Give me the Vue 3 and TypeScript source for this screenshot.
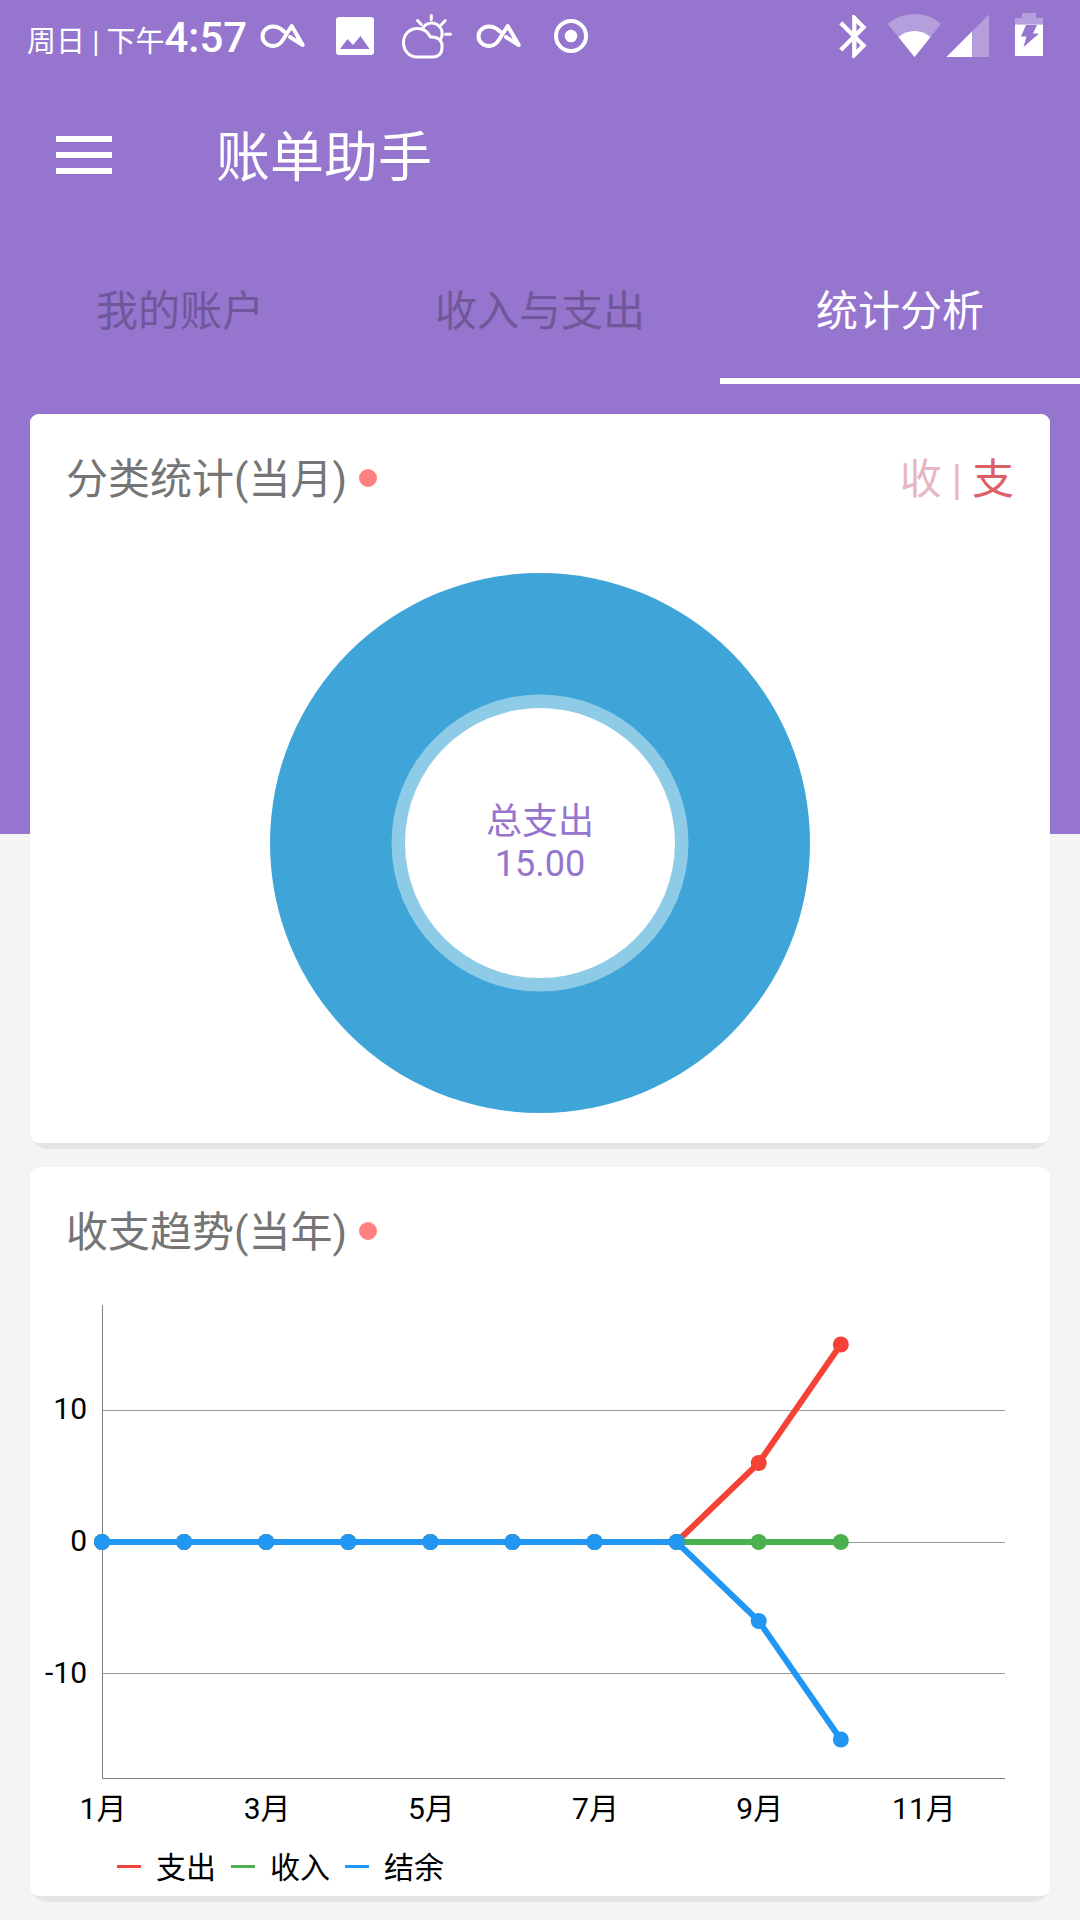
<script setup lang="ts">
import { computed, ref } from 'vue'

interface Series {
  name: string
  color: string
  values: number[]
}

const tabs: string[] = ['我的账户', '收入与支出', '统计分析']
const activeTab = ref<number>(2)
const mode = ref<'income' | 'expense'>('expense')

const series: Series[] = [
  { name: '支出', color: '#f44336', values: [0, 0, 0, 0, 0, 0, 0, 0, 6, 15] },
  { name: '收入', color: '#4caf50', values: [0, 0, 0, 0, 0, 0, 0, 0, 0, 0] },
  { name: '结余', color: '#2196f3', values: [0, 0, 0, 0, 0, 0, 0, 0, -6, -15] },
]

// Plot area inside the 1020 x 540 chart canvas
const plot = { left: 72, right: 975, top: 9, bottom: 483, max: 18 }
const zeroY = (plot.top + plot.bottom) / 2
const px = (month: number): number => plot.left + ((plot.right - plot.left) * month) / 11
const py = (value: number): number => zeroY - (value * (plot.bottom - plot.top)) / (2 * plot.max)

const ticks: number[] = [10, 0, -10]
const months: number[] = [1, 3, 5, 7, 9, 11]

const lines = computed(() =>
  series.map((s) => ({
    ...s,
    dots: s.values.map((v, i) => ({ x: px(i), y: py(v) })),
    points: s.values.map((v, i) => `${px(i)},${py(v)}`).join(' '),
  })),
)
</script>

<template>
  <div class="app">
    <header class="top">
      <div class="status">
        <div class="clock"><span class="day">周日 | 下午</span><span class="time">4:57</span></div>
        <div class="notices">
          <svg viewBox="0 0 72 72" class="line-icon bold">
            <path d="M37 31.5C34 28.500 30 26.500 26 26.500C20 26.500 15.500 31 15.500 36.200C15.500 41.500 20 46 26 46C30.500 46 33.500 43.500 35.500 40.500L44.700 26L55.700 45L43 37" />
          </svg>
          <svg viewBox="0 0 72 72" class="fill-icon">
            <path fill-rule="evenodd" d="M20 17H52A3 3 0 0 1 55 20V52A3 3 0 0 1 52 55H20A3 3 0 0 1 17 52V20A3 3 0 0 1 20 17ZM21 49H50.500L41.500 36L34 45L28.500 39Z" />
          </svg>
          <svg viewBox="0 0 72 72" class="line-icon">
            <path d="M26 57C18 57 12.500 50.500 12.500 42.500C12.500 34.500 18.500 28.500 26.500 28.500C33 28.500 37 32 39.500 37C46 36.500 51 40 51 45V48C51 53.500 47 57 42 57Z" />
            <path d="M31.500 28.500A10.500 10.500 0 1 1 49 40M40.300 15.500V19.500M26.500 20.500L30.300 24.500M54.300 20.500L50.500 24.500M54.500 34.300H59.500" />
          </svg>
          <svg viewBox="0 0 72 72" class="line-icon bold">
            <path d="M37 31.5C34 28.500 30 26.500 26 26.500C20 26.500 15.500 31 15.500 36.200C15.500 41.500 20 46 26 46C30.500 46 33.500 43.500 35.500 40.500L44.700 26L55.700 45L43 37" />
          </svg>
          <svg viewBox="0 0 72 72" class="fill-icon">
            <circle cx="36" cy="36" r="15" fill="none" stroke="#fff" stroke-width="4" />
            <circle cx="36" cy="36" r="6.300" />
          </svg>
        </div>
        <div class="system">
          <svg viewBox="0 0 60 72" class="fill-icon">
            <path transform="translate(6.500 10.600) scale(2.150)" d="M17.710 7.710L12 2h-1v7.590L6.410 5 5 6.410 10.590 12 5 17.590 6.410 19 11 14.410V22h1l5.710-5.710-4.300-4.290 4.300-4.290zM13 5.830l1.880 1.880L13 9.590V5.830zm1.880 10.460L13 18.170v-3.760l1.880 1.880z" />
          </svg>
          <svg viewBox="0 0 60 72" class="fill-icon">
            <path opacity="0.300" d="M5.700 24C13 17.500 22.500 14 32.500 14S52 17.500 59 24L32.500 57Z" />
            <path d="M16.500 37C21 33 26.500 31 32.500 31S44 33 48.500 37L32.500 57Z" />
          </svg>
          <svg viewBox="0 0 60 72" class="fill-icon">
            <path opacity="0.300" d="M47 14.500V57H4.500Z" />
            <path d="M30 31.500V57H4.500Z" />
          </svg>
          <svg viewBox="0 0 60 72" class="fill-icon">
            <path opacity="0.300" d="M20 13H34V18H41V24.500H13V18H20Z" />
            <path fill-rule="evenodd" d="M13 24.500H41V56H13ZM24 25L19 36.500H24.500L21.500 47L37 33.500H31L35 25Z" />
          </svg>
        </div>
      </div>

      <div class="toolbar">
        <button class="menu" type="button" aria-label="菜单">
          <span></span><span></span><span></span>
        </button>
        <h1>账单助手</h1>
      </div>

      <nav class="tabs" role="tablist">
        <button
          v-for="(tab, i) in tabs"
          :key="tab"
          type="button"
          role="tab"
          :aria-selected="i === activeTab"
          :class="['tab', { active: i === activeTab }]"
          @click="activeTab = i"
        >
          {{ tab }}
        </button>
      </nav>
    </header>

    <main class="content">
      <section class="card">
        <div class="card-body">
          <div class="card-head">
            <h2>分类统计(当月)</h2>
            <i class="dot"></i>
            <div class="switch">
              <button type="button" :class="{ on: mode === 'income' }" @click="mode = 'income'">收</button>
              <span>|</span>
              <button type="button" :class="{ on: mode === 'expense' }" @click="mode = 'expense'">支</button>
            </div>
          </div>
          <div class="donut-wrap">
            <svg class="donut" viewBox="0 0 540 540">
              <circle cx="270" cy="270" r="270" fill="#3fa5d8" />
              <circle cx="270" cy="270" r="148.500" fill="#8ecbe7" />
              <circle cx="270" cy="270" r="135" fill="#fff" />
              <text x="270" y="261">总支出</text>
              <text x="270" y="303">15.00</text>
            </svg>
          </div>
        </div>
      </section>

      <section class="card">
        <div class="card-body">
          <div class="card-head">
            <h2>收支趋势(当年)</h2>
            <i class="dot"></i>
          </div>
          <svg class="chart" viewBox="0 0 1020 540">
            <g v-for="t in ticks" :key="t">
              <line
                class="grid"
                :x1="plot.left"
                :x2="plot.right"
                :y1="Math.floor(py(t)) + 0.5"
                :y2="Math.floor(py(t)) + 0.5"
              />
              <text class="y-label" x="57" :y="Math.round(py(t)) + 9">{{ t }}</text>
            </g>
            <path class="axis" d="M72.500 9V482.500H975" />
            <text v-for="m in months" :key="m" class="x-label" :x="px(m - 1) + 1" y="523">{{ m }}月</text>
            <g v-for="l in lines" :key="l.name">
              <polyline :points="l.points" :stroke="l.color" />
              <circle v-for="(d, i) in l.dots" :key="i" :cx="d.x" :cy="d.y" r="8" :fill="l.color" />
            </g>
          </svg>
          <ul class="legend">
            <li v-for="s in series" :key="s.name">
              <span class="dash" :style="{ background: s.color }"></span>
              <span class="name">{{ s.name }}</span>
            </li>
          </ul>
        </div>
      </section>
    </main>
  </div>
</template>

<style>
body {
  background: #f4f4f4;
}
</style>

<style scoped>
.app {
  font-family: Roboto, 'Noto Sans CJK SC', sans-serif;
  color: #000;
}

button {
  padding: 0;
  border: 0;
  background: none;
  font: inherit;
  color: inherit;
}

h1,
h2 {
  margin: 0;
  font-weight: 400;
}

.top {
  background: #9575cd;
  color: #fff;
}

.status {
  display: flex;
  align-items: center;
  height: 72px;
  padding: 0 18px 0 27px;
}

.clock {
  display: flex;
  align-items: baseline;
  padding-top: 2px;
  white-space: nowrap;
}

.day {
  font-size: 29px;
}

.time {
  font-size: 42px;
  font-weight: 500;
}

.notices,
.system {
  display: flex;
}

.notices svg {
  width: 72px;
  height: 72px;
}

.system {
  margin-left: auto;
}

.system svg {
  width: 60px;
  height: 72px;
}

.line-icon {
  fill: none;
  stroke: #fff;
  stroke-width: 3;
  stroke-linecap: round;
  stroke-linejoin: round;
}

.line-icon.bold {
  stroke-width: 4;
}

.fill-icon {
  fill: #fff;
}

.toolbar {
  display: flex;
  align-items: center;
  gap: 104px;
  height: 166px;
  padding: 0 56px;
}

.menu {
  display: flex;
  flex-direction: column;
  gap: 10px;
  width: 56px;
}

.menu span {
  height: 6px;
  background: #fff;
}

.toolbar h1 {
  padding-top: 8px;
  font-size: 54px;
  line-height: 64px;
}

.tabs {
  display: grid;
  grid-template-columns: repeat(3, 1fr);
}

.tab {
  height: 146px;
  border-top: 8px solid transparent;
  border-bottom: 6px solid transparent;
  font-size: 42px;
  line-height: 60px;
  color: #70579a;
}

.tab.active {
  border-bottom-color: #fff;
  color: #fff;
}

.content {
  display: flex;
  flex-direction: column;
  gap: 18px;
  padding: 30px 30px 18px;
  background: linear-gradient(#9575cd 450px, #f4f4f4 450px);
}

.card {
  padding-bottom: 6px;
  border-radius: 9px 9px 18px 18px;
  background: #e5e5e5;
}

.card-body {
  border-radius: 9px;
  background: #fff;
}

.card-head {
  display: flex;
  align-items: center;
  gap: 12px;
  height: 128px;
  padding: 0 36px 1px;
  font-size: 42px;
  line-height: 56px;
}

.card-head h2,
.switch {
  padding-top: 4px;
}

.card-head h2 {
  font-size: 42px;
  color: #757575;
}

.dot {
  width: 18px;
  height: 18px;
  border-radius: 50%;
  background: #ff8080;
}

.switch {
  display: flex;
  gap: 10px;
  margin-left: auto;
  color: #e8b6c3;
}

.switch .on {
  color: #dd6067;
}

.donut-wrap {
  display: flex;
  justify-content: center;
  padding: 30px;
}

.donut {
  display: block;
  width: 540px;
  max-width: 100%;
}

.donut text {
  font-size: 36px;
  text-anchor: middle;
  fill: #9575cd;
}

.chart {
  display: block;
  width: 100%;
}

.chart text {
  font-size: 30px;
}

.chart polyline {
  fill: none;
  stroke-width: 6;
}

.grid {
  stroke: #999;
}

.axis {
  fill: none;
  stroke: #808080;
}

.y-label {
  text-anchor: end;
}

.x-label {
  text-anchor: middle;
}

.legend {
  display: flex;
  gap: 15px;
  margin: 0;
  padding: 0 87px;
  list-style: none;
  font-size: 30px;
  line-height: 56px;
}

.legend li {
  display: flex;
  align-items: center;
  gap: 15px;
}

.name {
  padding-top: 4px;
}

.dash {
  width: 24px;
  height: 3px;
}
</style>
